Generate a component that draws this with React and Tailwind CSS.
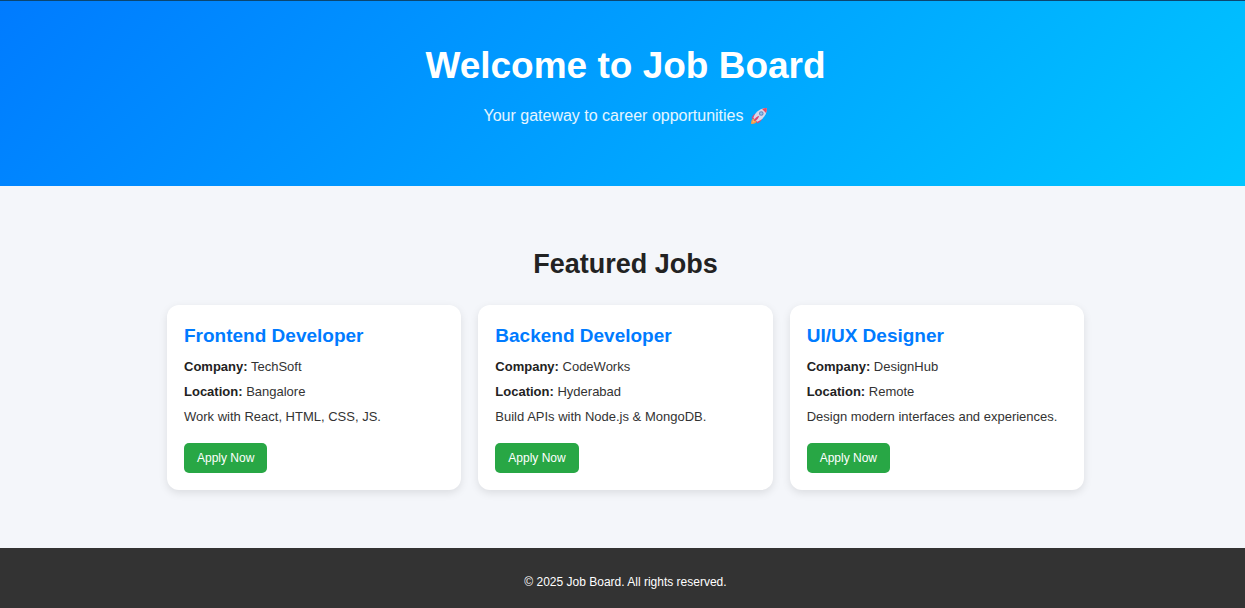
const jobs = [
  {
    title: 'Frontend Developer',
    company: 'TechSoft',
    location: 'Bangalore',
    description: 'Work with React, HTML, CSS, JS.',
  },
  {
    title: 'Backend Developer',
    company: 'CodeWorks',
    location: 'Hyderabad',
    description: 'Build APIs with Node.js & MongoDB.',
  },
  {
    title: 'UI/UX Designer',
    company: 'DesignHub',
    location: 'Remote',
    description: 'Design modern interfaces and experiences.',
  },
];

function Rocket() {
  return (
    <svg role="img" aria-label="rocket" viewBox="0 0 32 32" className="size-[18px] shrink-0">
      <path d="M8 19C3 21 1.500 25 2 30c5 .5 9-1 11-6z" fill="#f59a4a" />
      <path d="M8 23c-2 .5-3.500 2.500-3.500 4.500 2 0 4-1.500 4.500-3.500z" fill="#ffc766" />
      <path d="M13 11C8 11.500 4.500 15 2.500 20.500l7 .5zM22 18c0 5-4 9-9.500 11.500L11 23z" fill="#d94a7b" />
      <path d="M30 2C20 1.500 10 7.500 6 19l7 7C24.500 22 30.500 12 30 2z" fill="#d6d8ec" />
      <path d="M30 2c-3-.2-6 .3-8.500 1.500l7 7C29.700 8 30.200 5 30 2z" fill="#e34d66" />
      <circle cx="20" cy="11.500" r="4" fill="#5f86bd" />
      <circle cx="20" cy="11.500" r="2.300" fill="#91c1ef" />
      <path d="M16.500 15.500C12 17 8 20 6.500 25.500 12 24 15 20 16.500 15.500z" fill="#dc3f70" />
    </svg>
  );
}

function JobCard({ job }) {
  return (
    <article className="rounded-xl bg-white p-[17px] shadow-[0_3px_8px_rgba(0,0,0,0.1)]">
      <h3 className="text-[19px] leading-7 font-bold text-[#007bff]">{job.title}</h3>
      <p className="mt-1 leading-[25px]">
        <strong className="text-[#222]">Company:</strong> {job.company}
      </p>
      <p className="leading-[25px]">
        <strong className="text-[#222]">Location:</strong> {job.location}
      </p>
      <p className="leading-[25px]">{job.description}</p>
      <button
        type="button"
        className="mt-3.5 block h-[30px] cursor-pointer rounded-[5px] bg-[#28a745] px-[13px] text-[12px] text-white"
      >
        Apply Now
      </button>
    </article>
  );
}

export default function App() {
  return (
    <div className="flex min-h-screen flex-col bg-[#f4f6fa] font-['Liberation_Sans',Arial,sans-serif] text-[13px] text-[#333]">
      <header className="border-t border-[#0a4672] bg-[linear-gradient(135deg,#007bff,#00c6ff)] bg-origin-border pt-[41px] pr-4 pb-14 pl-[22px] text-center text-white">
        <h1 className="text-[37px] leading-12 font-bold">Welcome to Job Board</h1>
        <p className="mt-3 flex items-center justify-center gap-1.5 text-[16px] leading-7 text-white/90">
          Your gateway to career opportunities
          <Rocket />
        </p>
      </header>

      <main className="grow pt-[58px] pr-4 pb-[58px] pl-[22px]">
        <h2 className="text-center text-[27px] leading-10 font-bold text-[#222]">Featured Jobs</h2>
        <div className="mx-auto mt-[21px] grid max-w-[917px] gap-[17px] sm:grid-cols-2 md:grid-cols-3">
          {jobs.map((job) => (
            <JobCard key={job.title} job={job} />
          ))}
        </div>
      </main>

      <footer className="bg-[#333] pt-6 pr-4 pb-4 pl-[22px] text-center text-[12px] leading-5 text-white">
        <p>© 2025 Job Board. All rights reserved.</p>
      </footer>
    </div>
  );
}
